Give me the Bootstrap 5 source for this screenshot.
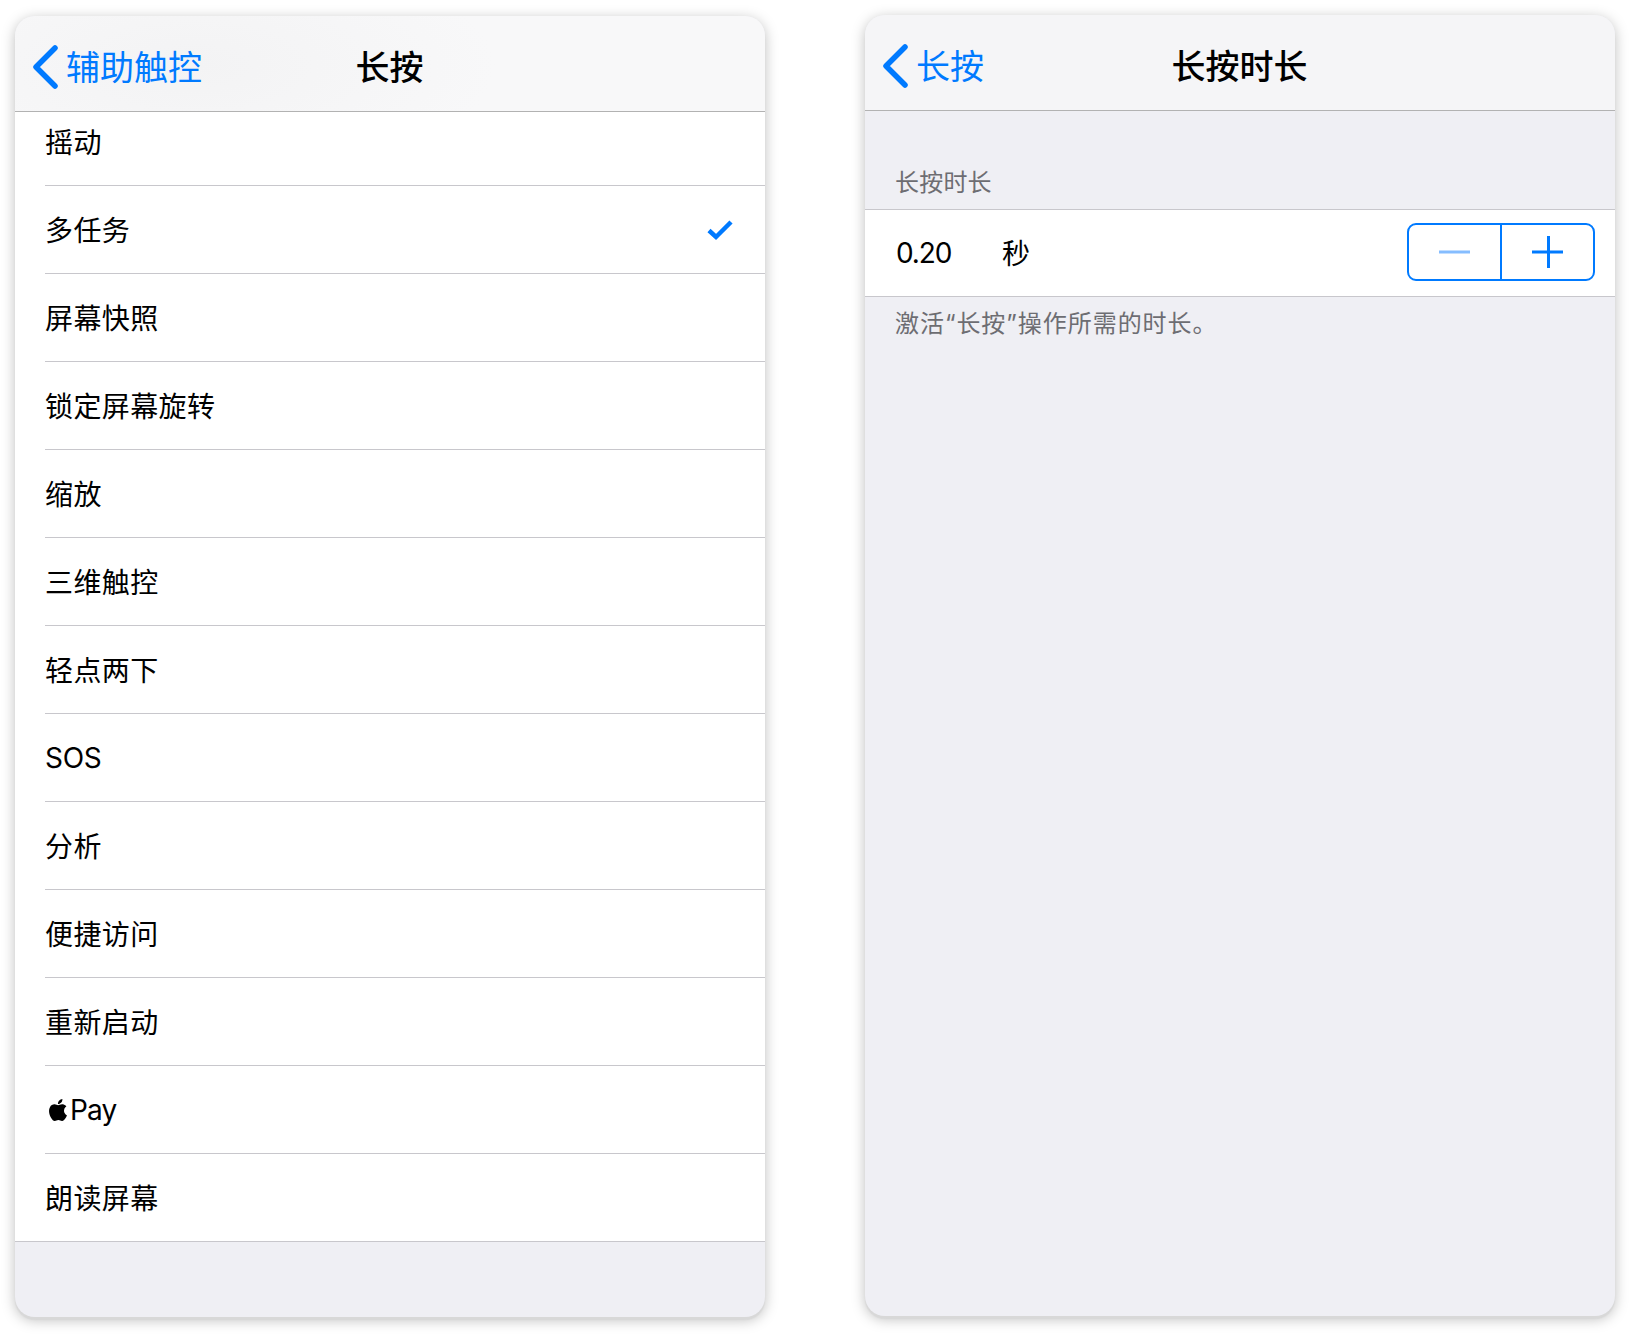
<!DOCTYPE html>
<html lang="zh-CN">
<head>
<meta charset="utf-8">
<title>长按</title>
<link href="https://cdn.jsdelivr.net/npm/bootstrap@5.3.0/dist/css/bootstrap.min.css" rel="stylesheet">
<style>
html,body{height:1336px;overflow:hidden;background:#fff}
body{font-family:Inter,"Noto Sans CJK SC",sans-serif;color:#000;padding:15px 15px 0 15px;-webkit-font-smoothing:antialiased}
.ios-stage{gap:100px;align-items:flex-start}
.ios-win{width:750px;height:1301px;border-radius:20px;background:#efeff4;overflow:hidden;box-shadow:0 3px 1px #d8d8d8,0 3px 14px rgba(0,0,0,.26)}
.ios-win.left-win{margin-top:1px}
.ios-nav{height:96px;border-bottom:1.5px solid #b2b2b2;position:relative;background:#f5f5f7;padding-top:9px}
.left-win .ios-nav{background:radial-gradient(ellipse 300px 120px at 180px 50px,#f3f3f4,#f8f8f9)}
.ios-back{color:#007aff;font-size:34px;line-height:1;gap:8px;padding-left:17px}
.ios-back svg{display:block;margin-top:-2px}
.ios-title{position:absolute;left:0;right:1px;top:9px;bottom:0;display:flex;align-items:center;justify-content:center;font-size:34px;font-weight:500;padding-bottom:2px}
.ios-list{border-radius:0;background:#fff;border-bottom:1.5px solid #c8c7cc}
.ios-row{height:88px;margin-left:30px;padding:2px 30px 0 0;border:0;border-bottom:1.5px solid #c8c7cc;border-radius:0!important;font-size:28px;letter-spacing:.4px;background:#fff;color:#000;line-height:1}
.ios-row:last-child{border-bottom:0;height:87px}
.ios-row.clipped{height:74px;padding:0 30px 12px 0}
.ios-row.ios-latin{letter-spacing:-.3px;padding-top:0}
.ios-row.ios-pay{gap:3px;padding-top:0}
.ios-pay span{letter-spacing:-.8px}
.ios-check{margin-top:-2px}
.ios-head{font-size:24px;letter-spacing:.2px;color:#6d6d72;padding:54px 30px 0;height:99px;line-height:36px;border-bottom:1.5px solid #c8c7cc}
.ios-group{height:87px;background:#fff;border-bottom:1.5px solid #c8c7cc;padding:0 20px 0 31px;font-size:28px}
.ios-val{width:106px;letter-spacing:-1.1px}
.ios-sec{padding-top:2px}
.ios-stepper{width:188px;height:58px;border:2px solid #007aff;border-radius:9px;overflow:hidden;margin-bottom:2px}
.ios-step{flex:1;padding:0;border:0;background:transparent;border-radius:0}
.ios-step+.ios-step{border-left:2px solid #007aff}
.ios-note{font-size:24px;letter-spacing:.95px;color:#6d6d72;padding:9px 30px;line-height:36px}
</style>
</head>
<body>
<div class="d-flex ios-stage">
  <section class="ios-win left-win d-flex flex-column">
    <header class="ios-nav d-flex align-items-center">
      <div class="ios-title">长按</div>
      <div class="ios-back d-flex align-items-center position-relative">
        <svg width="26" height="44" viewBox="0 0 26 44"><path d="M23 3 L4 22 L23 41" fill="none" stroke="#007aff" stroke-width="5.5" stroke-linecap="round" stroke-linejoin="round"/></svg>
        <span>辅助触控</span>
      </div>
    </header>
    <div class="list-group ios-list">
      <div class="list-group-item ios-row clipped d-flex align-items-center">摇动</div>
      <div class="list-group-item ios-row d-flex align-items-center justify-content-between">
        <span>多任务</span>
        <svg class="ios-check" width="28" height="22" viewBox="0 0 28 22"><path d="M2 11.5 L9 18 L24 3" fill="none" stroke="#007aff" stroke-width="4.5"/></svg>
      </div>
      <div class="list-group-item ios-row d-flex align-items-center">屏幕快照</div>
      <div class="list-group-item ios-row d-flex align-items-center">锁定屏幕旋转</div>
      <div class="list-group-item ios-row d-flex align-items-center">缩放</div>
      <div class="list-group-item ios-row d-flex align-items-center">三维触控</div>
      <div class="list-group-item ios-row d-flex align-items-center">轻点两下</div>
      <div class="list-group-item ios-row d-flex align-items-center ios-latin">SOS</div>
      <div class="list-group-item ios-row d-flex align-items-center">分析</div>
      <div class="list-group-item ios-row d-flex align-items-center">便捷访问</div>
      <div class="list-group-item ios-row d-flex align-items-center">重新启动</div>
      <div class="list-group-item ios-row d-flex align-items-center ios-pay">
        <svg width="18" height="22" viewBox="3 0 18 24" class="ms-1"><path d="M12.152 6.896c-.948 0-2.415-1.078-3.96-1.04-2.04.027-3.91 1.183-4.961 3.014-2.117 3.675-.546 9.103 1.519 12.09 1.013 1.454 2.208 3.09 3.792 3.039 1.52-.065 2.09-.987 3.935-.987 1.831 0 2.35.987 3.96.948 1.637-.026 2.676-1.48 3.676-2.948 1.156-1.688 1.636-3.325 1.662-3.415-.039-.013-3.182-1.221-3.22-4.857-.026-3.04 2.48-4.494 2.597-4.559-1.429-2.09-3.623-2.324-4.39-2.376-2-.156-3.675 1.09-4.61 1.09zM15.53 3.83c.843-1.012 1.4-2.427 1.245-3.83-1.207.052-2.662.805-3.532 1.818-.78.896-1.454 2.338-1.273 3.714 1.338.104 2.715-.688 3.559-1.701"/></svg>
        <span>Pay</span>
      </div>
      <div class="list-group-item ios-row d-flex align-items-center">朗读屏幕</div>
    </div>
  </section>
  <section class="ios-win d-flex flex-column">
    <header class="ios-nav d-flex align-items-center">
      <div class="ios-title">长按时长</div>
      <div class="ios-back d-flex align-items-center position-relative">
        <svg width="26" height="44" viewBox="0 0 26 44"><path d="M23 3 L4 22 L23 41" fill="none" stroke="#007aff" stroke-width="5.5" stroke-linecap="round" stroke-linejoin="round"/></svg>
        <span>长按</span>
      </div>
    </header>
    <div class="ios-head">长按时长</div>
    <div class="ios-group d-flex align-items-center">
      <span class="ios-val">0.20</span>
      <span class="ios-sec">秒</span>
      <div class="btn-group ios-stepper ms-auto">
        <button type="button" class="btn ios-step d-flex align-items-center justify-content-center" aria-label="减少">
          <svg width="32" height="32" viewBox="0 0 32 32"><rect x="0" y="14.5" width="31" height="3" fill="#85bdff"/></svg>
        </button>
        <button type="button" class="btn ios-step d-flex align-items-center justify-content-center" aria-label="增加">
          <svg width="32" height="32" viewBox="0 0 32 32"><rect x="1" y="14.5" width="31" height="3" fill="#007aff"/><rect x="16" y="0" width="3" height="32" fill="#007aff"/></svg>
        </button>
      </div>
    </div>
    <div class="ios-note">激活“长按”操作所需的时长。</div>
  </section>
</div>
<script src="https://cdn.jsdelivr.net/npm/bootstrap@5.3.0/dist/js/bootstrap.bundle.min.js"></script>
</body>
</html>
